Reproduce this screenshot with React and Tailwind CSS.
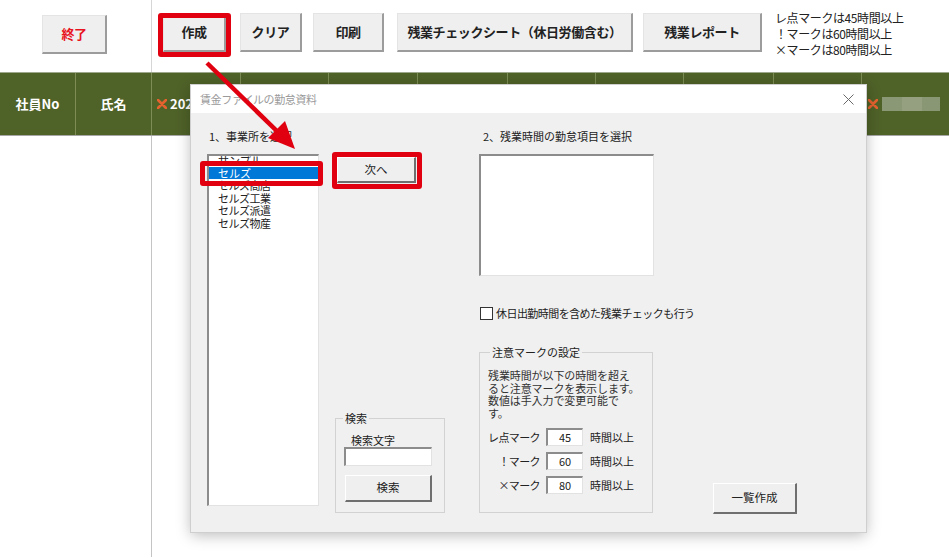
import clsx from 'clsx';

const raised = 'border-t border-l border-t-white border-l-white border-r-2 border-b-2 border-r-[#6f6f6f] border-b-[#6f6f6f] bg-[#efefef]';
const sunken = 'border-t-2 border-l-2 border-t-[#8c8c8c] border-l-[#8c8c8c] border-r border-b border-r-[#e2e2e2] border-b-[#e2e2e2] bg-white';
const topBtn = 'flex h-[39px] items-center justify-center border-t border-l border-t-[#e4e4e4] border-l-[#e4e4e4] border-r-2 border-b-2 border-r-[#9c9c9c] border-b-[#9c9c9c] bg-[#efefef] text-[13px] font-bold tracking-[-0.4px] text-[#222]';

const columns = [89, 88, 89, 90, 88, 88, 90, 88];
const offices = ['セルズ商店', 'セルズ工業', 'セルズ派遣', 'セルズ物産'];
const marks = [
  { label: 'レ点マーク', value: '45' },
  { label: '！マーク', value: '60' },
  { label: '×マーク', value: '80' },
];

function WinButton({ children, className }) {
  return (
    <div className={clsx('flex shrink-0 items-center justify-center text-[11.5px] text-[#222]', raised, className)}>
      {children}
    </div>
  );
}

function XMark({ className }) {
  return (
    <svg className={className} width="10" height="10" viewBox="0 0 10 10">
      <path d="M1 1 L9 9 M9 1 L1 9" stroke="#e5622f" strokeWidth="2.6" strokeLinecap="round" />
    </svg>
  );
}

export default function App() {
  return (
    <div className="relative h-[558px] w-[949px] overflow-hidden bg-white font-['Noto_Sans_CJK_JP',sans-serif]">
      {/* top toolbar */}
      <div className="flex h-[72px]">
        <div className="w-[152px] shrink-0 border-r border-[#d6d6d6] pl-[42px] pt-[15px]">
          <div className={clsx(topBtn, 'h-[37px] w-[65px] text-[#e8141e]')}>終了</div>
        </div>
        <div className="flex items-start pt-[13px]">
          <div className="relative ml-[11px]">
            <div className={clsx(topBtn, 'w-[63px]')}>作成</div>
            <div className="absolute -left-[5px] top-0 -right-[5px] -bottom-[5px] rounded-[3px] border-[5px] border-[#e0000f]" />
          </div>
          <div className={clsx(topBtn, 'ml-[14px] w-[62px]')}>クリア</div>
          <div className={clsx(topBtn, 'ml-[11px] w-[71px]')}>印刷</div>
          <div className={clsx(topBtn, 'ml-[13px] w-[236px]')}>残業チェックシート（休日労働含む）</div>
          <div className={clsx(topBtn, 'ml-[10px] w-[119px]')}>残業レポート</div>
          <div className="-mt-[3px] ml-[13px] whitespace-nowrap text-[12px] leading-[16px] tracking-[-0.4px] text-[#222]">
            <div>レ点マークは45時間以上</div>
            <div>！マークは60時間以上</div>
            <div>×マークは80時間以上</div>
          </div>
        </div>
      </div>

      {/* green header row */}
      <div className="flex h-[64px] border-t border-b border-t-[#9ea88c] border-b-[#a6a6a6] bg-[#4f6228] text-[13px] font-bold text-white">
        <div className="flex w-[76px] items-center justify-center border-r border-[#7d8d55]">社員No</div>
        <div className="flex w-[76px] items-center justify-center border-r border-[#7d8d55]">氏名</div>
        {columns.map((w, i) => (
          <div key={i} className="flex items-center overflow-hidden border-r border-[#7d8d55] pl-[5px]" style={{ width: w }}>
            {i === 0 ? (
              <>
                <XMark className="mr-[3px] shrink-0" />
                <span className="whitespace-nowrap">2021/04</span>
              </>
            ) : null}
          </div>
        ))}
        <div className="flex flex-1 items-center pl-[6px]">
          <XMark className="mr-[4px] shrink-0" />
          <div className="flex h-[14px] w-[58px]">
            <div className="w-[20px] bg-[#8b9876]" />
            <div className="w-[20px] bg-[#94a07f]" />
            <div className="w-[18px] bg-[#8a9775]" />
          </div>
        </div>
      </div>

      {/* grid body */}
      <div className="flex h-[421px]">
        <div className="w-[152px] border-r border-[#c4c4c4]" />
      </div>

      {/* dialog */}
      <div className="absolute left-[191px] top-[85px] w-[675px] shadow-[0_0_0_1px_#cfcfcf,0_3px_14px_rgba(0,0,0,0.28)]">
        <div className="flex h-[28px] items-center justify-between bg-white pl-[9px] pr-[12px]">
          <span className="text-[11px] tracking-[-0.4px] text-[#9a9a9a]">賃金ファイルの勤怠資料</span>
          <svg width="11" height="11" viewBox="0 0 11 11">
            <path d="M0.5 0.5 L10.5 10.5 M10.5 0.5 L0.5 10.5" stroke="#6a6a6a" strokeWidth="1" />
          </svg>
        </div>
        <div className="flex h-[419px] items-start bg-[#f0f0f0] pl-[16px] text-[11px] text-[#222]">
          {/* column 1 */}
          <div className="flex w-[112px] shrink-0 flex-col">
            <div className="mt-[16px] h-[14px] whitespace-nowrap pl-[2px] leading-[14px]">1、事業所を選択</div>
            <div className={clsx('mt-[11px] h-[352px] overflow-hidden leading-[12.5px]', sunken)}>
              <div className="-mt-[2px] h-[12.5px] pl-[9px]">サンプル</div>
              <div className="h-[12.5px] bg-[#0078d7] pl-[9px] text-white">セルズ</div>
              {offices.map((name) => (
                <div key={name} className="h-[12.5px] pl-[9px] tracking-[-0.5px]">{name}</div>
              ))}
            </div>
          </div>

          {/* column 2 */}
          <div className="ml-[16px] flex w-[110px] shrink-0 flex-col">
            <WinButton className="ml-[2px] mt-[44px] h-[26px] w-[79px]">次へ</WinButton>
            <fieldset className="mt-[228px] h-[102px] w-[110px] border border-[#d2d2d2] px-[6px]">
              <legend className="ml-[1px] px-[2px] text-[11px] leading-[14px]">検索</legend>
              <div className="mt-[8px] h-[14px] pl-[9px] leading-[14px]">検索文字</div>
              <div className={clsx('ml-[2px] h-[19px] w-[88px]', sunken)} />
              <WinButton className="ml-[3px] mt-[9px] h-[27px] w-[87px]">検索</WinButton>
            </fieldset>
          </div>

          {/* column 3 */}
          <div className="ml-[34px] flex w-[175px] shrink-0 flex-col">
            <div className="mt-[16px] h-[14px] whitespace-nowrap pl-[4px] leading-[14px]">2、残業時間の勤怠項目を選択</div>
            <div className={clsx('mt-[11px] h-[122px]', sunken)} />
            <div className="mt-[31px] flex h-[13px] items-center whitespace-nowrap">
              <div className="ml-[1px] h-[13px] w-[13px] shrink-0 border border-[#333] bg-white" />
              <span className="ml-[3px] tracking-[-0.55px]">休日出勤時間を含めた残業チェックも行う</span>
            </div>
            <fieldset className="mt-[25px] h-[168px] w-[174px] border border-[#d2d2d2] px-[8px]">
              <legend className="ml-[2px] px-[2px] text-[11px] leading-[14px]">注意マークの設定</legend>
              <div className="mt-[10px] whitespace-nowrap text-[11px] leading-[12.7px] tracking-[-0.1px] text-[#333]">
                残業時間が以下の時間を超え<br />
                ると注意マークを表示します。<br />
                数値は手入力で変更可能で<br />
                す。
              </div>
              <div className="mt-[8px] flex flex-col gap-[6px]">
                {marks.map((m) => (
                  <div key={m.value} className="flex h-[18px] items-center whitespace-nowrap">
                    <div className="flex w-[52px] shrink-0 justify-end tracking-[-0.6px]">{m.label}</div>
                    <div className={clsx('ml-[6px] flex h-[18px] w-[37px] shrink-0 items-center justify-center', sunken)}>{m.value}</div>
                    <div className="ml-[7px]">時間以上</div>
                  </div>
                ))}
              </div>
            </fieldset>
          </div>

          {/* column 4 */}
          <WinButton className="ml-[59px] mt-[370px] h-[31px] w-[84px]">一覧作成</WinButton>
        </div>
      </div>

      {/* annotations */}
      <div className="absolute left-[200px] top-[161px] h-[25px] w-[123px] rounded-[3px] border-[5px] border-[#e0000f]" />
      <div className="absolute left-[332px] top-[152px] h-[37px] w-[90px] rounded-[3px] border-[5px] border-[#e0000f]" />
      <svg className="pointer-events-none absolute left-0 top-0" width="949" height="558">
        <line x1="207" y1="63" x2="282" y2="136" stroke="#e0000f" strokeWidth="4.5" />
        <polygon points="295,149 268,138 285,121" fill="#e0000f" />
      </svg>
    </div>
  );
}
